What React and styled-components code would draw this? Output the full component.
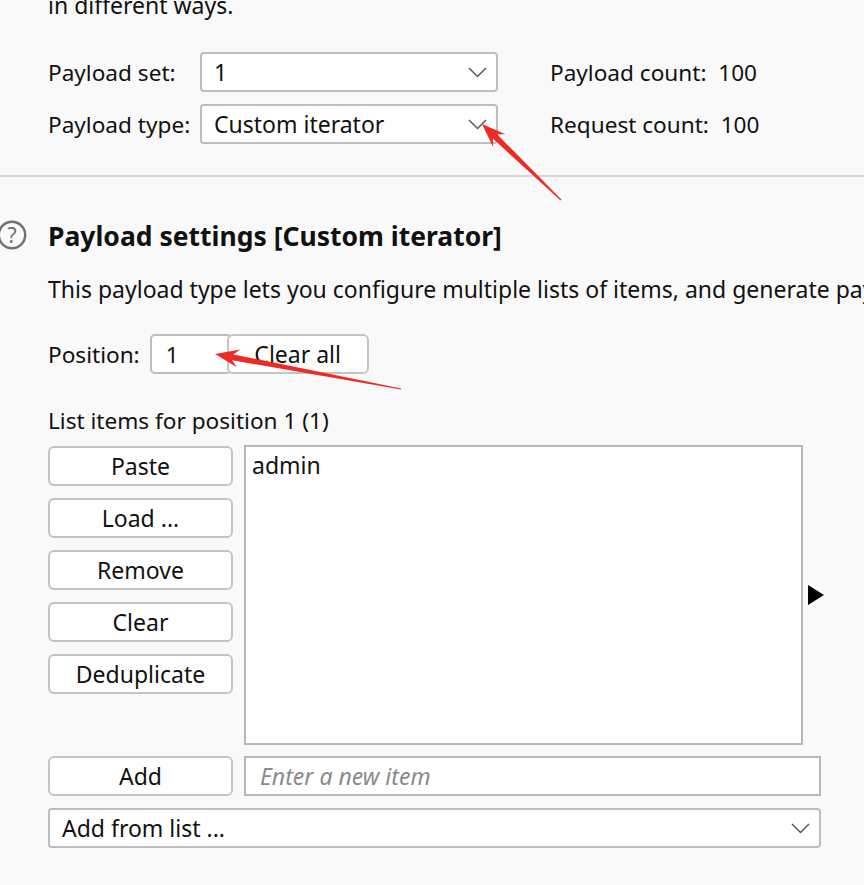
import React from 'react'
import styled, { createGlobalStyle } from 'styled-components'

const GlobalStyle = createGlobalStyle`
  html, body {
    margin: 0;
    padding: 0;
    background: #f9f9f9;
    overflow: hidden;
  }
  body {
    font-family: "Noto Sans", "Open Sans", sans-serif;
    font-size: 23px;
    color: #111;
  }
`

const Page = styled.div`
  position: relative;
  width: 864px;
  height: 885px;
  overflow: hidden;
  background: #f9f9f9;
`

const Inner = styled.div`
  padding-left: 48px;
`

const IntroText = styled.div`
  line-height: 30px;
  margin-top: -10px;
  white-space: nowrap;
`

const SetGrid = styled.div`
  display: grid;
  grid-template-columns: 152px 298px auto;
  grid-auto-rows: 40px;
  row-gap: 12px;
  margin-top: 32px;
  align-items: center;
  font-size: 22.6px;
`

const Label = styled.span`
  white-space: nowrap;
`

const CountLabel = styled.span`
  margin-left: 52px;
  white-space: pre;
`

const Select = styled.div`
  box-sizing: border-box;
  height: 40px;
  width: ${p => p.$width || '100%'};
  background: #fff;
  border: 2px solid #bdbdbd;
  border-radius: 4px;
  display: flex;
  align-items: center;
  justify-content: space-between;
  padding: 0 9px 0 12px;
  white-space: nowrap;
  font-size: 23px;
`

const Chevron = () => (
  <svg width="19" height="11" viewBox="0 0 19 11">
    <path d="M1 1 L9.5 9.5 L18 1" fill="none" stroke="#5a5a5a" strokeWidth="1.5" />
  </svg>
)

const Divider = styled.div`
  height: 2px;
  background: #d6d6d6;
  margin-top: 31px;
`

const Section = styled.div`
  padding-left: 48px;
`

const HeadingRow = styled.div`
  display: flex;
  align-items: center;
  margin-left: -48px;
  margin-top: 41px;
  height: 36px;
`

const HelpIcon = () => (
  <svg width="48" height="36" viewBox="0 0 48 36">
    <circle cx="12" cy="17" r="13.2" fill="none" stroke="#707070" strokeWidth="2.4" />
    <text x="12" y="25" textAnchor="middle" fontSize="21" fill="#707070"
      fontFamily="Noto Sans, sans-serif">?</text>
  </svg>
)

const Heading = styled.h2`
  margin: 0;
  font-size: 26.5px;
  font-weight: 700;
  white-space: nowrap;
`

const Desc = styled.div`
  margin-top: 20px;
  line-height: 30px;
  white-space: nowrap;
`

const PositionRow = styled.div`
  display: flex;
  align-items: center;
  margin-top: 30px;
  height: 40px;
  font-size: 22.6px;
`

const PosInput = styled.div`
  box-sizing: border-box;
  margin-left: 10px;
  width: 82px;
  height: 40px;
  background: #fff;
  border: 2px solid #bdbdbd;
  border-radius: 5px;
  padding-left: 14px;
  display: flex;
  align-items: center;
`

const Button = styled.button`
  box-sizing: border-box;
  height: 40px;
  width: ${p => p.$width || '185px'};
  background: #fff;
  border: 2px solid #c4c4c4;
  border-radius: 6px;
  font-family: "Noto Sans", "Open Sans", sans-serif;
  font-size: 23px;
  color: #111;
  padding: 0;
  margin-left: ${p => p.$overlap ? '-5px' : '0'};
`

const ListLabel = styled.div`
  margin-top: 32px;
  line-height: 30px;
  white-space: nowrap;
  font-size: 22.6px;
`

const ListArea = styled.div`
  display: grid;
  grid-template-columns: 185px 559px 20px;
  column-gap: 11px;
  margin-top: 9px;
`

const ButtonColumn = styled.div`
  display: flex;
  flex-direction: column;
  gap: 12px;
  padding-top: 1px;
`

const ListBox = styled.div`
  box-sizing: border-box;
  height: 300px;
  background: #fff;
  border: 2px solid #b8b8b8;
  padding: 2px 6px;
  line-height: 32px;
`

const Expander = styled.div`
  align-self: center;
  margin-left: -6px;
  width: 0;
  height: 0;
  border-top: 10px solid transparent;
  border-bottom: 10px solid transparent;
  border-left: 16px solid #000;
`

const AddRow = styled.div`
  display: grid;
  grid-template-columns: 185px 577px;
  column-gap: 11px;
  margin-top: 11px;
`

const TextInput = styled.div`
  box-sizing: border-box;
  height: 40px;
  background: #fff;
  border: 2px solid #b8b8b8;
  display: flex;
  align-items: center;
  padding-left: 14px;
  color: #8a8a8a;
  font-style: italic;
`

const AddFromWrap = styled.div`
  margin-top: 12px;
`

const Overlay = styled.svg`
  position: absolute;
  left: 0;
  top: 0;
  pointer-events: none;
`

// tapered red annotation arrow pointing from tail to tip
const arrowPoints = (tx, ty, sx, sy) => {
  const dx = tx - sx
  const dy = ty - sy
  const len = Math.hypot(dx, dy)
  const ux = dx / len
  const uy = dy / len
  const nx = -uy
  const ny = ux
  const p = (a, b) => [tx - ux * a + nx * b, ty - uy * a + ny * b]
  const pts = [
    [sx + nx * 0.6, sy + ny * 0.6],
    p(18, 3),
    p(24, 9),
    [tx, ty],
    p(24, -9),
    p(18, -3),
    [sx - nx * 0.6, sy - ny * 0.6],
  ]
  return pts.map(q => q.map(v => v.toFixed(1)).join(',')).join(' ')
}

const Arrows = () => (
  <Overlay width="864" height="885" viewBox="0 0 864 885">
    <polygon points={arrowPoints(482, 124, 561, 200)} fill="#ee2a24" />
    <polygon points={arrowPoints(215, 354, 401, 389)} fill="#ee2a24" />
  </Overlay>
)

export default function App() {
  return (
    <Page>
      <GlobalStyle />
      <Inner>
        <IntroText>in different ways.</IntroText>
        <SetGrid>
          <Label>Payload set:</Label>
          <Select>1<Chevron /></Select>
          <CountLabel>Payload count:  100</CountLabel>
          <Label>Payload type:</Label>
          <Select>Custom iterator<Chevron /></Select>
          <CountLabel>Request count:  100</CountLabel>
        </SetGrid>
      </Inner>
      <Divider />
      <Section>
        <HeadingRow>
          <HelpIcon />
          <Heading>Payload settings [Custom iterator]</Heading>
        </HeadingRow>
        <Desc>This payload type lets you configure multiple lists of items, and generate payloads based on all permutations of items in the lists.</Desc>
        <PositionRow>
          <span>Position:</span>
          <PosInput>1</PosInput>
          <Button $width="142px" $overlap>Clear all</Button>
        </PositionRow>
        <ListLabel>List items for position 1 (1)</ListLabel>
        <ListArea>
          <ButtonColumn>
            <Button>Paste</Button>
            <Button>Load ...</Button>
            <Button>Remove</Button>
            <Button>Clear</Button>
            <Button>Deduplicate</Button>
          </ButtonColumn>
          <ListBox>admin</ListBox>
          <Expander />
        </ListArea>
        <AddRow>
          <Button>Add</Button>
          <TextInput>Enter a new item</TextInput>
        </AddRow>
        <AddFromWrap>
          <Select $width="773px">Add from list ...<Chevron /></Select>
        </AddFromWrap>
      </Section>
      <Arrows />
    </Page>
  )
}
